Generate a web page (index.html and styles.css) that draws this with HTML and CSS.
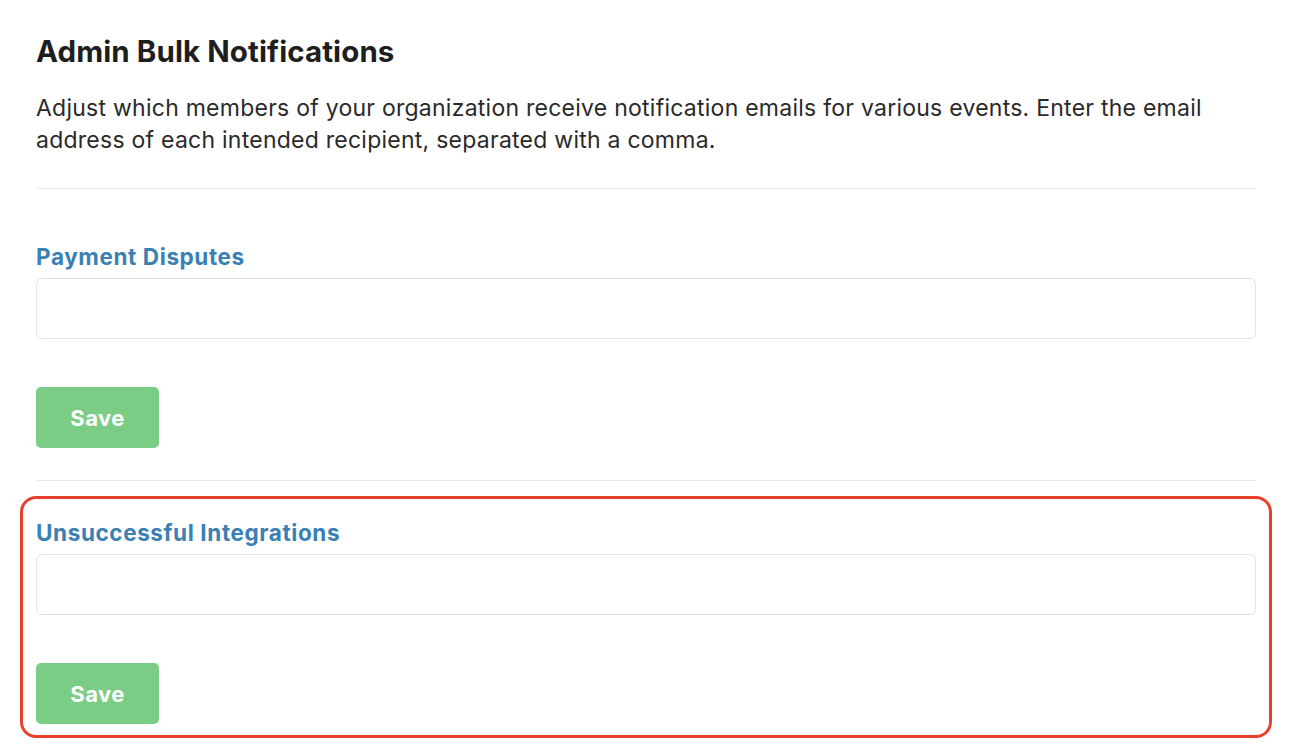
FILE: index.html
```html
<!DOCTYPE html>
<html>
<head>
<meta charset="utf-8">
<link rel="stylesheet" href="styles.css">
</head>
<body>
<main class="page">
  <h1 class="title">Admin Bulk Notifications</h1>
  <p class="intro">Adjust which members of your organization receive notification emails for various events. Enter the email address of each intended recipient, separated with a comma.</p>
  <hr class="divider first">
  <section class="group">
    <label class="label">Payment Disputes</label>
    <input class="field" type="text">
    <button class="save">Save</button>
  </section>
  <hr class="divider">
  <section class="group highlighted">
    <label class="label">Unsuccessful Integrations</label>
    <input class="field" type="text">
    <button class="save">Save</button>
    <div class="highlight"></div>
  </section>
</main>
</body>
</html>
```
FILE: styles.css
```css
* { box-sizing: border-box; }
html, body { margin: 0; background: #fff; }
body { font-family: Inter, "Open Sans", sans-serif; color: #222; }
.page { width: 1220px; margin-left: 36px; padding-top: 29px; padding-bottom: 20px; }
.title { margin: 0; font-size: 29.5px; letter-spacing: 0.1px; font-weight: 700; line-height: 44px; color: #1e1e1e; }
.intro { margin: 19px 0 0; font-size: 23px; letter-spacing: 0.25px; line-height: 32px; color: #2a2a2a; }
.divider { border: 0; border-top: 1px solid #ebebeb; margin: 0; }
.divider.first { margin-top: 32px; }
.group { display: flex; flex-direction: column; align-items: flex-start; position: relative; }
.group .label { font-size: 22.5px; letter-spacing: 0.6px; font-weight: 700; color: #3a80b4; line-height: 30px; margin-top: 53px; margin-bottom: 6px; }
.highlighted .label { margin-top: 37px; }
.field { width: 100%; height: 61px; border: 1px solid #e3e3e3; border-radius: 6px; background: #fff; }
.save { margin-top: 48px; width: 123px; height: 61px; border: 0; border-radius: 5px; background: #7bcd86; color: #fff; font-family: inherit; font-size: 22px; letter-spacing: 0.4px; font-weight: 700; margin-bottom: 32px; }
.highlighted .save { margin-bottom: 0; }
.highlight { position: absolute; left: -16px; right: -16px; top: 15px; bottom: -14px; border: 3px solid #e8412b; border-radius: 16px; pointer-events: none; }
```
